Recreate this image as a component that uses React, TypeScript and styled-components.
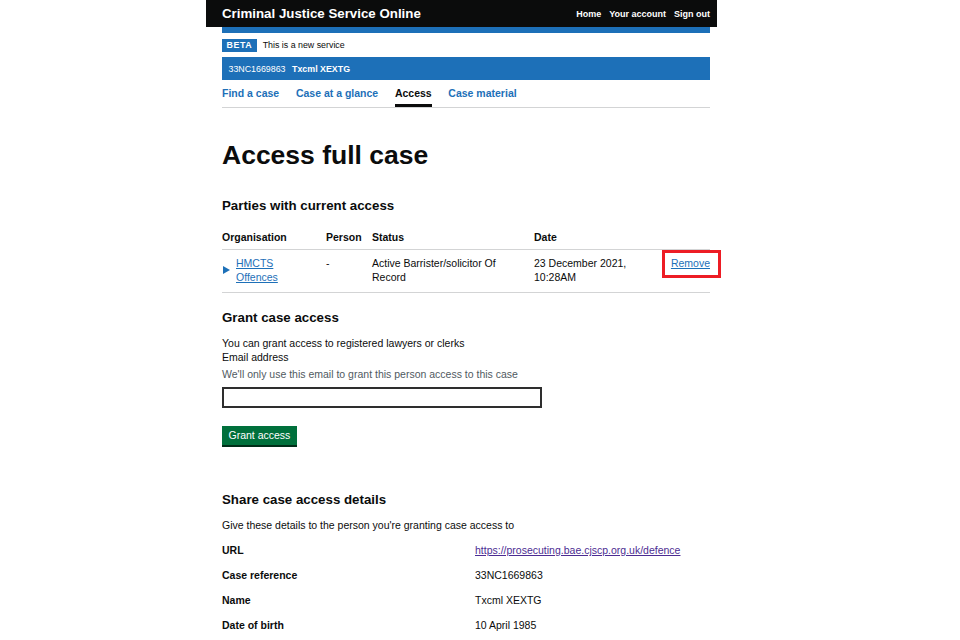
import React from "react";
import styled, { createGlobalStyle } from "styled-components";

const GlobalStyle = createGlobalStyle`
  *, *::before, *::after { box-sizing: border-box; }
  html { overflow: hidden; }
  html, body { margin: 0; padding: 0; background: #ffffff; }
  body {
    font-family: "Liberation Sans", Arial, sans-serif;
    color: #0b0c0c;
  }
`;

const Page = styled.div`
  width: 511px;
  margin-left: 206px;
`;

const Header = styled.header`
  background: #0b0c0c;
  height: 27px;
`;

const Container = styled.div`
  margin-left: 16px;
  width: 488px;
`;

const HeaderInner = styled(Container)`
  height: 100%;
  display: flex;
  align-items: center;
  justify-content: space-between;
`;

const ServiceName = styled.a`
  color: #ffffff;
  font-weight: 700;
  font-size: 13.3px;
  line-height: 16px;
  text-decoration: none;
`;

const HeaderNav = styled.nav`
  display: flex;
  gap: 8px;
`;

const HeaderLink = styled.a`
  color: #ffffff;
  font-weight: 700;
  font-size: 9px;
  line-height: 12px;
  text-decoration: none;
`;

const BlueStrip = styled(Container)`
  height: 6px;
  background: #1d70b8;
`;

const PhaseBanner = styled(Container)`
  display: flex;
  align-items: center;
  padding: 6px 0 5px;
  border-bottom: 1px solid #1d70b8;
`;

const Tag = styled.strong`
  display: inline-block;
  background: #1d70b8;
  color: #ffffff;
  font-size: 8.85px;
  line-height: 13px;
  letter-spacing: 0.55px;
  padding: 0 4.5px;
  text-transform: uppercase;
`;

const PhaseText = styled.span`
  margin-left: 6px;
  font-size: 8.85px;
  line-height: 13px;
`;

const CaseBar = styled(Container)`
  display: flex;
  align-items: center;
  gap: 6.5px;
  height: 22px;
  padding: 0 6.5px;
  background: #1d70b8;
  color: #ffffff;
  font-size: 8.85px;
`;

const CaseName = styled.strong`
  font-weight: 700;
`;

const Tabs = styled(Container).attrs({ as: "nav" })`
  display: flex;
  gap: 16.7px;
  border-bottom: 1px solid #d3d4d5;
`;

const Tab = styled.a<{ $active?: boolean }>`
  padding: 6px 0 4px;
  border-bottom: 3px solid ${(p) => (p.$active ? "#0b0c0c" : "transparent")};
  color: ${(p) => (p.$active ? "#0b0c0c" : "#1d70b8")};
  font-weight: 700;
  font-size: 10.5px;
  line-height: 14px;
  text-decoration: none;
`;

const Main = styled(Container).attrs({ as: "main" })``;

const Title = styled.h1`
  margin: 32px 0 0;
  font-size: 26.5px;
  line-height: 30px;
  font-weight: 700;
`;

const SectionHeading = styled.h2<{ $top: number }>`
  margin: ${(p) => p.$top}px 0 0;
  font-size: 13.3px;
  line-height: 16px;
  font-weight: 700;
`;

const Table = styled.table`
  margin-top: 10px;
  width: 100%;
  border-collapse: collapse;
  table-layout: fixed;
`;

const Th = styled.th<{ $w?: number }>`
  width: ${(p) => (p.$w ? `${p.$w}px` : "auto")};
  text-align: left;
  font-weight: 700;
  font-size: 10.5px;
  line-height: 14px;
  padding: 6px 11px 5px 0;
  border-bottom: 1px solid #d3d4d5;
`;

const Td = styled.td<{ $right?: boolean }>`
  vertical-align: top;
  text-align: ${(p) => (p.$right ? "right" : "left")};
  font-size: 10.5px;
  line-height: 14px;
  padding: 6px ${(p) => (p.$right ? 0 : 11)}px 8px 0;
  border-bottom: 1px solid #d3d4d5;
`;

const OrgSummary = styled.div`
  display: flex;
  align-items: center;
`;

const Arrow = styled.svg`
  flex: none;
  width: 7px;
  height: 8px;
  margin-left: 1px;
  margin-right: 6px;
`;

const Link = styled.a<{ $visited?: boolean }>`
  color: ${(p) => (p.$visited ? "#4c2c92" : "#1d70b8")};
  text-decoration: underline;
  text-underline-offset: 1px;
`;

const RemoveLink = styled(Link)`
  position: relative;
  &::after {
    content: "";
    position: absolute;
    left: -9px;
    right: -11px;
    top: -7px;
    bottom: -9px;
    border: 3px solid #ed1c24;
  }
`;

const Body = styled.p<{ $top?: number; $hint?: boolean }>`
  margin: ${(p) => p.$top ?? 0}px 0 0;
  font-size: 10.5px;
  line-height: 14px;
  color: ${(p) => (p.$hint ? "#505a5f" : "#0b0c0c")};
`;

const Label = styled.label`
  display: block;
  font-size: 10.5px;
  line-height: 14px;
`;

const Input = styled.input`
  display: block;
  margin-top: 6px;
  width: 320px;
  height: 21px;
  border: 2px solid #2e2e2e;
  border-radius: 0;
  font: inherit;
`;

const Button = styled.button`
  display: block;
  margin-top: 18px;
  height: 19px;
  padding: 0 6.5px;
  border: none;
  background: #00703c;
  box-shadow: 0 2px 0 #002d18;
  color: #ffffff;
  font-family: "Liberation Sans", Arial, sans-serif;
  font-size: 10.5px;
  line-height: 19px;
`;

const SummaryList = styled.dl`
  margin: 5.5px 0 0;
`;

const SummaryRow = styled.div`
  display: grid;
  grid-template-columns: 253px 1fr;
  padding: 5.5px 0;
  font-size: 10.5px;
  line-height: 14px;
`;

const Key = styled.dt`
  font-weight: 700;
`;

const Value = styled.dd`
  margin: 0;
`;

const details: [string, React.ReactNode][] = [
  ["URL", <Link $visited href="#">https://prosecuting.bae.cjscp.org.uk/defence</Link>],
  ["Case reference", "33NC1669863"],
  ["Name", "Txcml XEXTG"],
  ["Date of birth", "10 April 1985"],
];

export default function App() {
  return (
    <>
      <GlobalStyle />
      <Page>
        <Header>
          <HeaderInner>
            <ServiceName href="#">Criminal Justice Service Online</ServiceName>
            <HeaderNav>
              <HeaderLink href="#">Home</HeaderLink>
              <HeaderLink href="#">Your account</HeaderLink>
              <HeaderLink href="#">Sign out</HeaderLink>
            </HeaderNav>
          </HeaderInner>
        </Header>
        <BlueStrip />
        <PhaseBanner>
          <Tag>Beta</Tag>
          <PhaseText>This is a new service</PhaseText>
        </PhaseBanner>
        <CaseBar>
          <span>33NC1669863</span>
          <CaseName>Txcml XEXTG</CaseName>
        </CaseBar>
        <Tabs>
          <Tab href="#">Find a case</Tab>
          <Tab href="#">Case at a glance</Tab>
          <Tab href="#" $active>Access</Tab>
          <Tab href="#">Case material</Tab>
        </Tabs>
        <Main>
          <Title>Access full case</Title>
          <SectionHeading $top={28}>Parties with current access</SectionHeading>
          <Table>
            <thead>
              <tr>
                <Th $w={104}>Organisation</Th>
                <Th $w={46}>Person</Th>
                <Th $w={162}>Status</Th>
                <Th $w={117}>Date</Th>
                <Th />
              </tr>
            </thead>
            <tbody>
              <tr>
                <Td>
                  <OrgSummary>
                    <Arrow viewBox="0 0 7 8">
                      <path d="M0 0 L7 4 L0 8 Z" fill="#1d70b8" />
                    </Arrow>
                    <Link href="#">HMCTS<br />Offences</Link>
                  </OrgSummary>
                </Td>
                <Td>-</Td>
                <Td>Active Barrister/solicitor Of Record</Td>
                <Td>23 December 2021,<br />10:28AM</Td>
                <Td $right>
                  <RemoveLink href="#">Remove</RemoveLink>
                </Td>
              </tr>
            </tbody>
          </Table>

          <SectionHeading $top={17}>Grant case access</SectionHeading>
          <Body $top={10}>You can grant access to registered lawyers or clerks</Body>
          <Label htmlFor="email">Email address</Label>
          <Body $top={3} $hint>We'll only use this email to grant this person access to this case</Body>
          <Input id="email" type="email" />
          <Button type="button">Grant access</Button>

          <SectionHeading $top={47}>Share case access details</SectionHeading>
          <Body $top={10}>Give these details to the person you're granting case access to</Body>
          <SummaryList>
            {details.map(([k, v]) => (
              <SummaryRow key={k}>
                <Key>{k}</Key>
                <Value>{v}</Value>
              </SummaryRow>
            ))}
          </SummaryList>
        </Main>
      </Page>
    </>
  );
}
